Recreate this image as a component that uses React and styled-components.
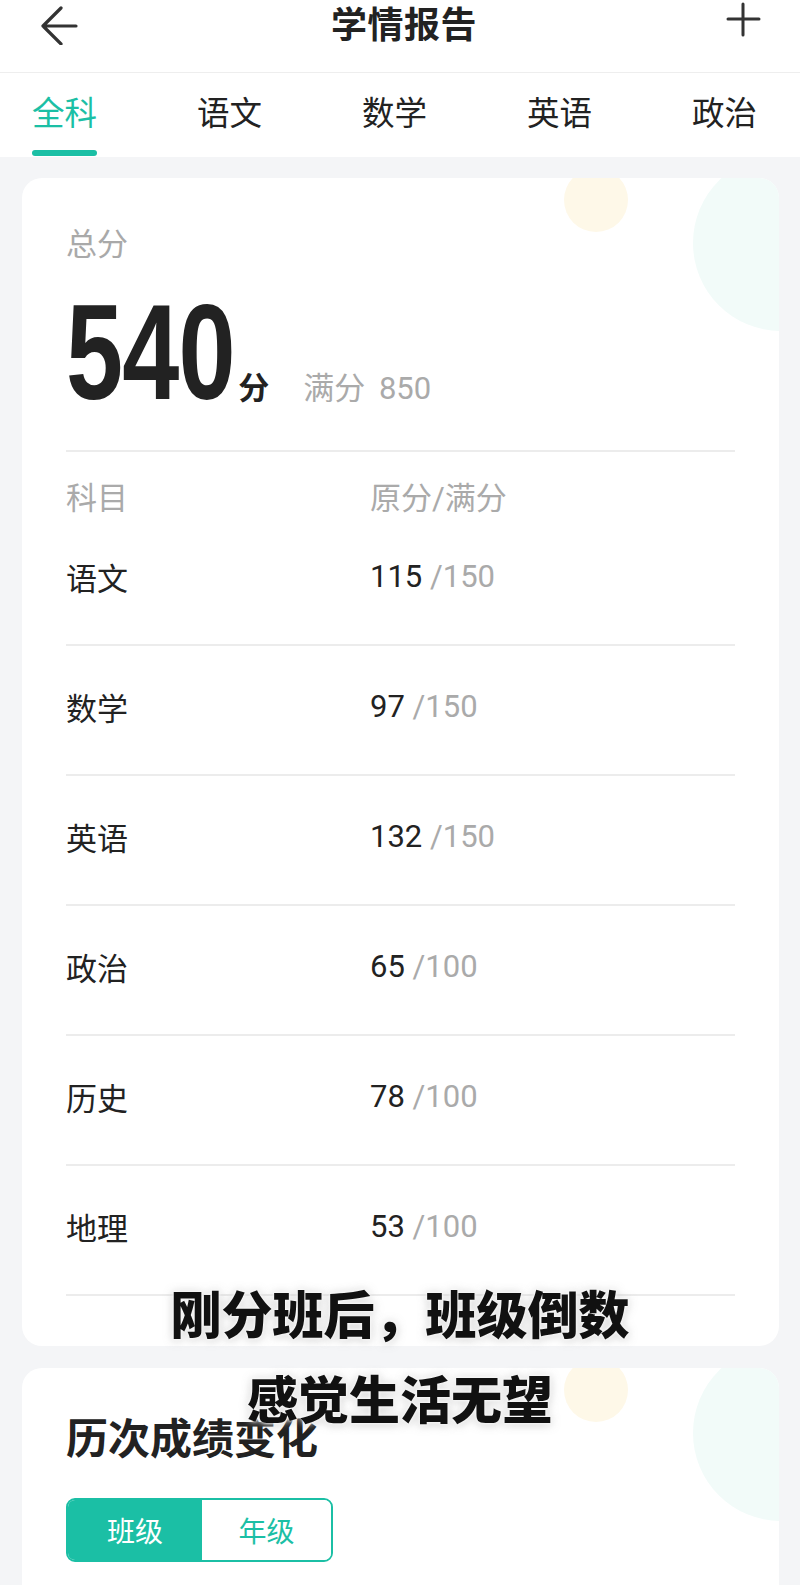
import React from "react";
import styled, { createGlobalStyle } from "styled-components";

const GlobalStyle = createGlobalStyle`
  html, body {
    margin: 0;
    padding: 0;
    background: #f4f5f7;
  }
  body {
    font-family: "Noto Sans CJK SC", "Noto Sans", sans-serif;
    color: #222;
  }
`;

const TEAL = "#1bbfa5";

const subjects = [
  { name: "语文", score: 115, full: 150 },
  { name: "数学", score: 97, full: 150 },
  { name: "英语", score: 132, full: 150 },
  { name: "政治", score: 65, full: 100 },
  { name: "历史", score: 78, full: 100 },
  { name: "地理", score: 53, full: 100 },
];

const tabs = ["全科", "语文", "数学", "英语", "政治"];

function App() {
  return (
    <Page>
      <GlobalStyle />
      <Header>
        <IconButton aria-label="back">
          <svg width="44" height="44" viewBox="0 0 44 44">
            <path
              d="M23 7 L5 25 L23 43 M5 25 H38"
              fill="none"
              stroke="#333"
              strokeWidth="3.2"
              strokeLinecap="round"
              strokeLinejoin="round"
            />
          </svg>
        </IconButton>
        <Title>学情报告</Title>
        <IconButton aria-label="add">
          <svg width="36" height="36" viewBox="0 0 36 36">
            <path
              d="M17 3 V34 M2 18 H33"
              fill="none"
              stroke="#333"
              strokeWidth="3"
              strokeLinecap="round"
            />
          </svg>
        </IconButton>
      </Header>

      <TabBar>
        {tabs.map((t, i) => (
          <Tab key={t} $active={i === 0}>
            {t}
          </Tab>
        ))}
      </TabBar>

      <Card>
        <Blob $left={542} $top={-10} $size={64} $color="#fef8e8" />
        <Blob $left={671} $top={-23} $size={176} $color="#f2fbf9" />

        <Label>总分</Label>
        <ScoreLine>
          <BigScore>540</BigScore>
          <Unit>分</Unit>
          <FullScore>满分 850</FullScore>
        </ScoreLine>

        <Table>
          <HeadRow>
            <span>科目</span>
            <span>原分/满分</span>
          </HeadRow>
          {subjects.map((s) => (
            <Row key={s.name}>
              <SubjectName>{s.name}</SubjectName>
              <Value>
                {s.score}
                <Muted> /{s.full}</Muted>
              </Value>
            </Row>
          ))}
        </Table>
      </Card>

      <Card $second>
        <Blob $left={542} $top={-10} $size={64} $color="#fef8e8" />
        <Blob $left={671} $top={-23} $size={176} $color="#f2fbf9" />
        <SectionTitle>历次成绩变化</SectionTitle>
        <Toggle>
          <ToggleItem $active>班级</ToggleItem>
          <ToggleItem>年级</ToggleItem>
        </Toggle>
      </Card>

      <Caption>
        <CaptionLine>刚分班后，班级倒数</CaptionLine>
        <CaptionLine>感觉生活无望</CaptionLine>
      </Caption>
    </Page>
  );
}

const Page = styled.div`
  position: relative;
  width: 800px;
  height: 1585px;
  overflow: hidden;
  background: #f4f5f7;
`;

const Header = styled.header`
  height: 72px;
  background: #fff;
  border-bottom: 1px solid #eeeeee;
  display: flex;
  justify-content: space-between;
  align-items: flex-start;
  padding: 0 38px 0 38px;
`;

const IconButton = styled.div`
  display: flex;
  align-items: center;
  justify-content: center;
  padding-top: 1px;
`;

const Title = styled.h1`
  margin: 0;
  padding-top: 2px;
  font-size: 36px;
  line-height: 40px;
  font-weight: 700;
  color: #222;
  letter-spacing: 0.5px;
`;

const TabBar = styled.nav`
  background: #fff;
  height: 84px;
  display: flex;
  gap: 100px;
  padding: 0 32px;
`;

const Tab = styled.div`
  position: relative;
  padding-top: 18px;
  font-size: 32.5px;
  line-height: 40px;
  color: ${({ $active }) => ($active ? TEAL : "#222")};

  &::after {
    content: "";
    display: ${({ $active }) => ($active ? "block" : "none")};
    position: absolute;
    left: 0;
    right: 0;
    top: 77px;
    height: 6px;
    border-radius: 3px;
    background: ${TEAL};
  }
`;

const Card = styled.section`
  position: relative;
  overflow: hidden;
  margin: ${({ $second }) => ($second ? "22px" : "21px")} 21px 0 22px;
  background: #fff;
  border-radius: ${({ $second }) => ($second ? "20px 20px 0 0" : "20px")};
  padding: ${({ $second }) => ($second ? "42px 44px 60px" : "44px 44px 50px")};
`;

const Blob = styled.div`
  position: absolute;
  left: ${({ $left }) => $left}px;
  top: ${({ $top }) => $top}px;
  width: ${({ $size }) => $size}px;
  height: ${({ $size }) => $size}px;
  border-radius: 50%;
  background: ${({ $color }) => $color};
  pointer-events: none;
`;

const Label = styled.div`
  position: relative;
  font-size: 31px;
  line-height: 40px;
  color: #a9a9a9;
`;

const ScoreLine = styled.div`
  position: relative;
  display: flex;
  align-items: baseline;
  margin-top: 31px;
  padding-bottom: 37px;
  border-bottom: 2px solid #ececec;
`;

/* the reference uses a condensed face: squeeze Liberation Sans Bold */
const BigScore = styled.span`
  display: inline-block;
  font-family: "Liberation Sans", "Roboto", sans-serif;
  font-weight: 700;
  font-size: 135px;
  line-height: 120px;
  color: #222;
  letter-spacing: -1px;
  transform: scaleX(0.76);
  transform-origin: left center;
  margin-right: -53px;
`;

const Unit = styled.span`
  margin-left: 3px;
  font-size: 31px;
  font-weight: 700;
  color: #222;
`;

const FullScore = styled.span`
  margin-left: 34px;
  font-family: "Roboto", "Noto Sans CJK SC", sans-serif;
  font-size: 31px;
  word-spacing: 6px;
  color: #aaaaaa;
`;

const Table = styled.div`
  position: relative;
  display: flex;
  flex-direction: column;
`;

const HeadRow = styled.div`
  display: grid;
  grid-template-columns: 304px 1fr;
  padding-top: 30px;
  font-size: 31px;
  line-height: 34px;
  color: #aaaaaa;
  font-family: "Roboto", "Noto Sans CJK SC", sans-serif;
`;

const Row = styled.div`
  display: grid;
  grid-template-columns: 304px 1fr;
  align-items: center;
  padding: 44px 0 50px;
  line-height: 34px;
  border-bottom: 2px solid #ececec;
`;

const SubjectName = styled.span`
  font-size: 31px;
  color: #222;
`;

const Value = styled.span`
  font-family: "Roboto", sans-serif;
  font-size: 31px;
  color: #222;
`;

const Muted = styled.span`
  color: #aaaaaa;
`;

const SectionTitle = styled.h2`
  position: relative;
  margin: 0;
  font-size: 42px;
  line-height: 52px;
  font-weight: 700;
  color: #222;
`;

const Toggle = styled.div`
  position: relative;
  margin-top: 36px;
  width: 267px;
  height: 64px;
  box-sizing: border-box;
  border: 2px solid ${TEAL};
  border-radius: 9px;
  overflow: hidden;
  display: grid;
  grid-template-columns: 134px 1fr;
`;

const ToggleItem = styled.div`
  display: flex;
  align-items: center;
  justify-content: center;
  font-size: 28px;
  background: ${({ $active }) => ($active ? TEAL : "#fff")};
  color: ${({ $active }) => ($active ? "#fff" : TEAL)};
`;

const Caption = styled.div`
  position: absolute;
  left: 0;
  right: 0;
  top: 1278px;
  display: flex;
  flex-direction: column;
  align-items: center;
  gap: 17px;
  pointer-events: none;
`;

const CaptionLine = styled.div`
  font-size: 51px;
  line-height: 68px;
  font-weight: 900;
  color: #111;
  text-shadow: 0 0 3px #fff, 0 0 6px #fff, 0 1px 10px rgba(120, 120, 120, 0.5);
`;

export default App;
